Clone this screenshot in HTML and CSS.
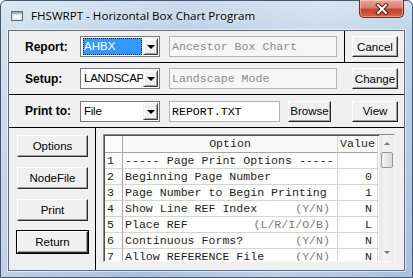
FILE: index.html
```html
<!DOCTYPE html>
<html lang="en">

<head>
    <meta charset="UTF-8">
    <title>FHSWRPT - Horizontal Box Chart Program</title>
    <link rel="stylesheet" href="styles.css">
</head>

<body>
    <div class="window">
        <div class="titlebar">
            <svg class="app-icon" width="12" height="10" viewBox="0 0 12 10">
                <rect x="0.5" y="0.5" width="11" height="9" fill="#f4f6f8" stroke="#5d6b7a"/>
                <rect x="1" y="1" width="10" height="2" fill="#9fb3c8"/>
                <rect x="2" y="4" width="8" height="4" fill="#ffffff" stroke="#b8c2cc" stroke-width="0.5"/>
            </svg>
            <span class="title">FHSWRPT - Horizontal Box Chart Program</span>
            <div class="close-btn">
                <svg width="14" height="12" viewBox="0 0 14 12">
                    <path d="M3 2 L11 10 M11 2 L3 10" stroke="#5a1a12" stroke-width="4" stroke-linecap="square"/>
                    <path d="M3 2 L11 10 M11 2 L3 10" stroke="#ffffff" stroke-width="2" stroke-linecap="square"/>
                </svg>
            </div>
        </div>

        <div class="client">
            <!-- report -->
            <div class="row">
                <span class="label">Report:</span>
                <div class="combo focused">
                    <span class="combo-text"><span class="sel">AHBX</span></span>
                    <span class="drop"><i></i></span>
                </div>
                <div class="edit disabled wide">Ancestor Box Chart</div>
                <div class="divider"></div>
                <button class="btn">Cancel</button>
            </div>

            <!-- setup -->
            <div class="row">
                <span class="label">Setup:</span>
                <div class="combo">
                    <span class="combo-text">LANDSCAP</span>
                    <span class="drop"><i></i></span>
                </div>
                <div class="edit disabled wide">Landscape Mode</div>
                <button class="btn push-right">Change</button>
            </div>

            <!-- print to -->
            <div class="row tall">
                <span class="label">Print to:</span>
                <div class="combo">
                    <span class="combo-text">File</span>
                    <span class="drop"><i></i></span>
                </div>
                <div class="edit short">REPORT.TXT</div>
                <button class="btn browse">Browse</button>
                <button class="btn push-right">View</button>
            </div>

            <div class="bottom">
                <div class="side">
                    <button class="btn side-btn">Options</button>
                    <button class="btn side-btn">NodeFile</button>
                    <button class="btn side-btn">Print</button>
                    <button class="btn side-btn default">Return</button>
                </div>

                <div class="grid-box">
                    <div class="grid">
                        <div class="cell head num"></div>
                        <div class="cell head center">Option</div>
                        <div class="cell head center">Value</div>

                        <div class="cell num">1</div>
                        <div class="cell">----- Page Print Options -----</div>
                        <div class="cell val"></div>

                        <div class="cell num">2</div>
                        <div class="cell">Beginning Page Number</div>
                        <div class="cell val">0</div>

                        <div class="cell num">3</div>
                        <div class="cell">Page Number to Begin Printing</div>
                        <div class="cell val">1</div>

                        <div class="cell num">4</div>
                        <div class="cell opt">Show Line REF Index<span class="hint">(Y/N)</span></div>
                        <div class="cell val">N</div>

                        <div class="cell num">5</div>
                        <div class="cell opt">Place REF<span class="hint">(L/R/I/O/B)</span></div>
                        <div class="cell val">L</div>

                        <div class="cell num">6</div>
                        <div class="cell opt">Continuous Forms?<span class="hint">(Y/N)</span></div>
                        <div class="cell val">N</div>

                        <div class="cell num">7</div>
                        <div class="cell opt">Allow REFERENCE File<span class="hint">(Y/N)</span></div>
                        <div class="cell val">N</div>
                    </div>
                    <div class="scrollbar">
                        <span class="arrow up"></span>
                        <span class="thumb"></span>
                        <span class="track"></span>
                        <span class="arrow down"></span>
                    </div>
                </div>
            </div>
        </div>
    </div>
</body>

</html>
```

FILE: styles.css
```css
body {
    margin: 0;
    width: 413px;
    height: 278px;
    overflow: hidden;
    background: #ffffff;
    font-family: 'Liberation Sans', Arial, sans-serif;
    font-size: 12px;
    color: #000;
}

.window {
    width: 413px;
    height: 278px;
    box-sizing: border-box;
    border: 1px solid #44576e;
    border-radius: 6px 6px 0 0;
    padding: 0 7px 6px 7px;
    display: flex;
    flex-direction: column;
    background:
        linear-gradient(100deg, rgba(255, 255, 255, 0.35) 0, rgba(255, 255, 255, 0) 40%, rgba(255, 255, 255, 0.25) 70%, rgba(255, 255, 255, 0) 100%),
        linear-gradient(180deg, #cddcee 0, #bcd0e7 30px, #a9c1de 100%);
}

/* title bar */
.titlebar {
    height: 29px;
    display: flex;
    align-items: center;
    position: relative;
}

.app-icon {
    margin-left: 3px;
    margin-top: 1px;
}

.title {
    margin-left: 8px;
    font-family: 'Open Sans', 'Liberation Sans', sans-serif;
    font-size: 11.6px;
    color: #000;
    text-shadow: 0 0 6px rgba(255, 255, 255, 0.9);
}

.close-btn {
    position: absolute;
    top: -1px;
    right: 1px;
    width: 43px;
    height: 17px;
    border: 1px solid #6e2b22;
    border-top: none;
    border-radius: 0 0 5px 5px;
    background: linear-gradient(180deg, #e9a598 0, #d7806f 45%, #c2432d 55%, #d5644a 100%);
    box-shadow: inset 0 0 0 1px rgba(255, 255, 255, 0.35);
    display: flex;
    align-items: center;
    justify-content: center;
}

/* client area */
.client {
    flex: 1;
    background: #f0f0f0;
    border: 1px solid #5a6e86;
    box-shadow: 0 0 0 1px rgba(255, 255, 255, 0.55);
    display: flex;
    flex-direction: column;
}

.row {
    height: 31px;
    border-bottom: 1px solid #000;
    display: flex;
    align-items: center;
    padding-left: 16px;
}

.row.tall {
    height: 32px;
}

.label {
    width: 55px;
    font-weight: bold;
    font-size: 12px;
}

.combo {
    width: 80px;
    height: 21px;
    box-sizing: border-box;
    border: 1px solid #7a7a7a;
    background: #fff;
    display: flex;
    align-items: center;
    padding-left: 1px;
}

.combo-text {
    flex: 1;
    min-width: 0;
    font-size: 11.5px;
    letter-spacing: -0.25px;
    height: 17px;
    line-height: 17px;
    overflow: hidden;
    white-space: nowrap;
    padding-left: 2px;
}

.combo.focused .combo-text {
    margin-right: 1px;
    padding-left: 1px;
    letter-spacing: 0;
}

.sel {
    display: block;
    background: #3399ff;
    color: #fff;
    padding-left: 1px;
    outline: 1px dotted #1a1a1a;
    outline-offset: -1px;
}

.drop {
    width: 15px;
    height: 17px;
    flex-shrink: 0;
    box-sizing: border-box;
    background: #f0f0f0;
    border: 1px solid;
    border-color: #f0f0f0 #404040 #404040 #f0f0f0;
    box-shadow: inset 1px 1px #fff, inset -1px -1px #a0a0a0;
    margin-right: 1px;
    display: flex;
    align-items: center;
    justify-content: center;
}

.drop i {
    width: 0;
    height: 0;
    border-left: 4px solid transparent;
    border-right: 4px solid transparent;
    border-top: 4px solid #000;
    margin-top: 1px;
}

.edit {
    height: 21px;
    box-sizing: border-box;
    margin-left: 9px;
    border: 1px solid #b5b5b5;
    background: #fff;
    font-family: 'Liberation Mono', 'Courier New', monospace;
    font-size: 11.6px;
    line-height: 19px;
    padding-left: 2px;
    white-space: nowrap;
}

.edit.disabled {
    background: #f6f6f6;
    color: #8c8c8c;
}

.edit.wide {
    width: 168px;
}

.edit.short {
    width: 111px;
}

.divider {
    align-self: stretch;
    width: 1px;
    background: #000;
    margin: 0 7px;
}

.btn {
    width: 46px;
    height: 21px;
    box-sizing: border-box;
    padding: 0;
    font-family: 'Liberation Sans', Arial, sans-serif;
    font-size: 11.5px;
    color: #000;
    background: #f0f0f0;
    border: 1px solid;
    border-color: #fff #2a2a2a #2a2a2a #fff;
    box-shadow: inset -1px -1px #a0a0a0;
}

.btn.push-right {
    margin-left: 15px;
}

.btn.browse {
    width: 43px;
    margin-left: 8px;
}

.row.tall .btn.push-right {
    margin-left: 21px;
}

/* lower area */
.bottom {
    flex: 1;
    display: flex;
}

.side {
    width: 87px;
    border-right: 1px solid #000;
    display: flex;
    flex-direction: column;
    gap: 10px;
    padding: 7px 0 0 8px;
    box-sizing: border-box;
}

.side-btn {
    width: 71px;
    height: 22px;
}

.side-btn.default {
    outline: 1px solid #000;
}

.grid-box {
    margin: 6px 0 0 7px;
    width: 292px;
    height: 128px;
    box-sizing: border-box;
    border: 1px solid;
    border-color: #8a8a8a #f8f8f8 #f8f8f8 #8a8a8a;
    box-shadow: inset 1px 1px #505050;
    background: #fff;
    display: flex;
    overflow: hidden;
}

.grid {
    display: grid;
    grid-template-columns: 18px 215px 40px;
    grid-auto-rows: 16px;
    grid-template-rows: 17px;
    align-content: start;
    font-family: 'Liberation Mono', 'Courier New', monospace;
    font-size: 11.6px;
    color: #1e1e1e;
    padding: 1px 0 0 1px;
}

.cell {
    box-sizing: border-box;
    border-right: 1px solid #d4d4d4;
    border-bottom: 1px solid #d4d4d4;
    line-height: 15px;
    padding: 0 2px;
    white-space: pre;
    overflow: hidden;
}

.cell.head {
    background: #f9f9f9;
    border-bottom-color: #a6a6a6;
    line-height: 16px;
}

.cell.num {
    background: #fbfbfb;
    border-right-color: #a6a6a6;
}

.center {
    text-align: center;
}

.opt {
    display: flex;
    justify-content: space-between;
    padding-right: 7px;
}

.hint {
    color: #7a7a7a;
}

.val {
    text-align: right;
    padding-right: 5px;
}

/* scrollbar */
.scrollbar {
    width: 17px;
    margin-left: 1px;
    display: flex;
    flex-direction: column;
    background: linear-gradient(90deg, #e6e6e6, #f2f2f2 40%, #ececec);
}

.arrow {
    height: 17px;
    display: flex;
    align-items: center;
    justify-content: center;
}

.arrow::after {
    content: "";
    width: 0;
    height: 0;
    border-left: 3px solid transparent;
    border-right: 3px solid transparent;
}

.arrow.up::after {
    border-bottom: 3px solid #777;
}

.arrow.down::after {
    border-top: 3px solid #777;
}

.thumb {
    height: 16px;
    margin: 0 1px 0 2px;
    box-sizing: border-box;
    border: 1px solid #989898;
    border-radius: 2px;
    background: linear-gradient(90deg, #f4f4f4, #e9e9e9 50%, #d9d9d9);
}

.track {
    flex: 1;
}
```
